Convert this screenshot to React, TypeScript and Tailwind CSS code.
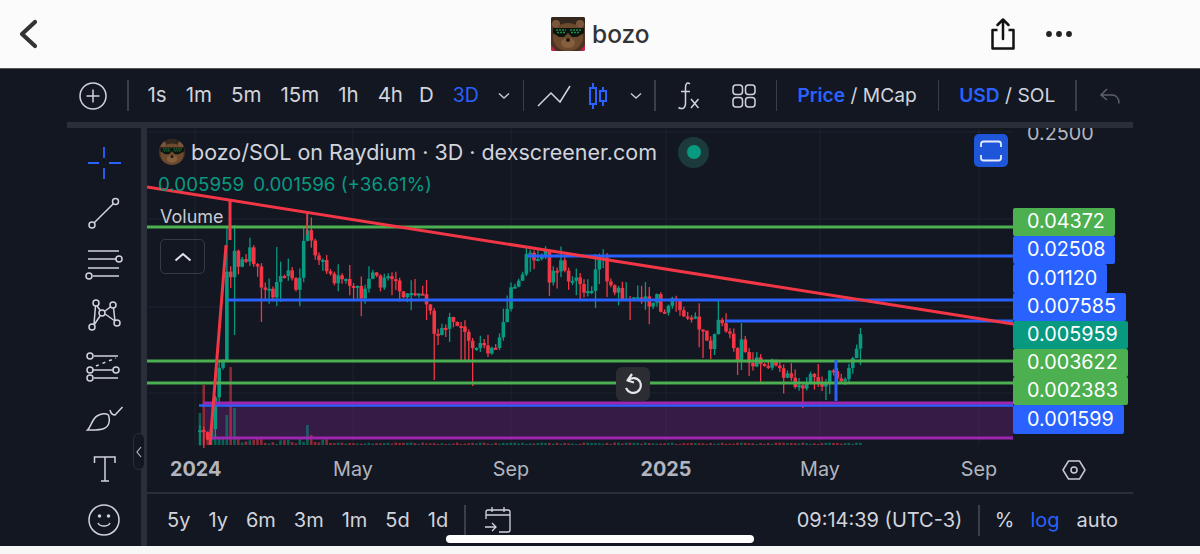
import React from "react";

const KEYS: [number, number][] = [[200,430],[204,432],[208,440],[212,428],[216,392],[220,362],[224,360],[227,268],[231,278],[235,247],[239,270],[243,258],[247,268],[251,244],[255,270],[259,268],[263,298],[267,280],[271,295],[275,290],[278,270],[282,282],[286,266],[290,270],[293,287],[297,288],[301,273],[305,228],[309,240],[313,248],[317,262],[321,248],[325,268],[329,275],[333,285],[337,276],[345,285],[352,279],[357,290],[364,298],[370,270],[375,268],[378,285],[382,282],[386,272],[392,280],[397,285],[403,295],[412,292],[420,294],[424,300],[430,312],[435,333],[440,335],[447,322],[452,320],[456,326],[460,330],[465,335],[468,345],[474,347],[478,342],[485,346],[490,350],[495,345],[500,340],[503,325],[507,305],[511,290],[515,283],[520,285],[527,257],[537,256],[542,255],[546,253],[550,283],[556,268],[562,265],[568,285],[575,280],[585,292],[590,300],[595,268],[600,258],[604,262],[608,285],[612,292],[620,293],[625,300],[630,298],[640,300],[650,303],[656,297],[663,313],[672,298],[680,310],[690,316],[697,322],[704,338],[710,350],[714,340],[720,308],[725,332],[731,335],[737,362],[741,342],[746,350],[752,365],[757,358],[762,362],[767,372],[771,358],[777,362],[787,378],[795,382],[800,385],[805,390],[809,370],[813,378],[817,382],[825,388],[828,372],[833,368],[837,378],[843,382],[848,370],[852,360],[856,352],[860,335]];

const WICKS: [number, number | null, number | null][] = [[234,225,335],[262,null,322],[277,247,null],[305,228,null],[309,213,null],[435,null,380],[439,null,345],[460,null,360],[465,null,360],[468,null,360],[474,null,386],[527,248,null],[597,254,null],[595,null,308],[720,300,null],[737,null,375],[743,323,370],[703,null,358],[825,null,400],[860,328,null],[226,228,null],[215,null,438]];

let seed = 12345;
const rnd = () => {
  seed = (seed * 1103515245 + 12345) & 0x7fffffff;
  return seed / 0x7fffffff;
};
const closeAt = (x: number) => {
  for (let i = 1; i < KEYS.length; i++) {
    if (x <= KEYS[i][0]) {
      const [x0, y0] = KEYS[i - 1];
      const [x1, y1] = KEYS[i];
      return y0 + ((y1 - y0) * (x - x0)) / (x1 - x0);
    }
  }
  return KEYS[KEYS.length - 1][1];
};
type C = { x: number; o: number; c: number; h: number; l: number; v: number };
const CANDLES: C[] = [];
{
  let prev = 432;
  for (let i = 0; i <= 172; i++) {
    const x = 200 + i * 3.84;
    const amp = x > 240 && x < 800 ? 11 : x >= 800 ? 5 : 1;
    const c = closeAt(x) + (rnd() - 0.5) * amp;
    const o = prev;
    const longH = rnd() > 0.6 ? 18 : 5;
    const longL = rnd() > 0.6 ? 20 : 5;
    let h = Math.min(o, c) - rnd() * longH;
    let l = Math.max(o, c) + rnd() * longL;
    for (const [wx, wh, wl] of WICKS) {
      if (Math.abs(wx - x) < 1.95) {
        if (wh !== null) h = wh;
        if (wl !== null) l = wl;
      }
    }
    if (x > 205 && l > 440) l = 440;
    const base = x < 240 ? 8 : 1 + rnd() * (x < 330 ? 6 : 1.5);
    CANDLES.push({ x, o, c, h, l, v: base });
    prev = c;
  }
}
const VOLS: Record<number, number> = { 200: 32, 203: 60, 207: 12, 215: 10, 226: 30, 230: 78, 234: 37, 307: 20, 311: 10 };
const volOf = (c: C) => {
  for (const k of Object.keys(VOLS)) if (Math.abs(Number(k) - c.x) < 1.95) return VOLS[Number(k)];
  return c.v;
};

const GREEN = "#089981";
const RED = "#f23645";
const LBLUE = "#2962ff";
const LGREEN = "#4caf50";

function Chart() {
  return (
    <svg className="absolute inset-0" width={986} height={320} viewBox="147 128 986 320">
      {[195, 353, 511, 666, 820, 979].map((x) => (
        <line key={x} x1={x} x2={x} y1={128} y2={445} stroke="#1f2330" />
      ))}
      {[132, 219, 307, 393].map((y) => (
        <line key={y} x1={147} x2={1013} y1={y} y2={y} stroke="#1f2330" />
      ))}
      <rect x={205} y={403} width={808} height={35} fill="#9c27b0" fillOpacity={0.26} />
      {CANDLES.map((c, i) => (
        <rect key={i} x={c.x - 1.4} y={445 - volOf(c)} width={2.6} height={volOf(c)} fill={c.c <= c.o ? GREEN : RED} fillOpacity={0.55} />
      ))}
      {CANDLES.map((c, i) => {
        const col = c.c <= c.o ? GREEN : RED;
        return (
          <g key={i}>
            <line x1={c.x} x2={c.x} y1={c.h} y2={c.l} stroke={col} strokeWidth={1.3} />
            <rect x={c.x - 1.8} y={Math.min(c.o, c.c)} width={3.6} height={Math.max(2, Math.abs(c.o - c.c))} fill={col} />
          </g>
        );
      })}
      <g strokeWidth={3} fill="none">
        <path d="M147 227H1013M147 361H1013M147 383H1013" stroke={LGREEN} />
        <path d="M199 405.500H1013" stroke={LBLUE} strokeWidth={2.500} />
        <path d="M203 403H1013M210 438H1013" stroke="#9c27b0" />
        <path d="M527 256H1013M228 300H1013M725 321H1013" stroke={LBLUE} />
        <path d="M836 360V401" stroke={LBLUE} />
        <path d="M147 187L1013 324" stroke={RED} />
        <path d="M210 445L226 245" stroke={RED} />
        <path d="M230 200V240" stroke={RED} />
        <path d="M307 213V235" stroke={RED} strokeWidth={1.5} />
      </g>
    </svg>
  );
}

function Bear({ size, round }: { size: number; round?: boolean }) {
  return (
    <svg width={size} height={size} viewBox="0 0 34 34" className={round ? "rounded-full shrink-0" : "rounded-[2px] shrink-0"}>
      <rect width={34} height={34} fill="#4a3324" />
      <rect width={34} height={7} fill="#33271e" />
      <circle cx={5} cy={7} r={4} fill="#7a573c" />
      <circle cx={29} cy={7} r={4} fill="#7a573c" />
      <ellipse cx={17} cy={20} rx={15} ry={14} fill="#6d4a2e" />
      <ellipse cx={17} cy={26} rx={7} ry={5} fill="#84603f" />
      <circle cx={17} cy={23} r={2} fill="#221510" />
      <path d="M2 11H33V16L26 20H21L17 16L13 20H8L2 16Z" fill="#0b1510" />
      <path d="M5 13H15M19 13H30M6 15.500H14M20 15.500H29" stroke="#1e8a45" strokeWidth={1.3} strokeDasharray="2 1" />
      {!round && <path d="M0 34V28L5 34ZM34 34V28L29 34Z" fill="#c81f4a" />}
    </svg>
  );
}

const Sep = () => <div className="w-[1.5px] h-[31px] bg-[#3a3e4a] shrink-0" />;
const Chev = () => (
  <svg width={14} height={8} viewBox="0 0 14 8" fill="none" stroke="#c8cad0" strokeWidth={1.4} className="shrink-0">
    <path d="M2 1.500L7 6L12 1.500" />
  </svg>
);

function Tool({ y, children }: { y: number; children: React.ReactNode }) {
  return (
    <svg width={44} height={44} viewBox={`82 ${y} 44 44`} fill="none" stroke="#d1d4dc" strokeWidth={1.5} className="shrink-0">
      {children}
    </svg>
  );
}

const LABELS: [string, string][] = [
  ["0.04372", "bg-[#4caf50]"],
  ["0.02508", "bg-[#2962ff]"],
  ["0.01120", "bg-[#2962ff]"],
  ["0.007585", "bg-[#2962ff]"],
  ["0.005959", "bg-[#089981]"],
  ["0.003622", "bg-[#4caf50]"],
  ["0.002383", "bg-[#4caf50]"],
  ["0.001599", "bg-[#2962ff]"],
];

export default function App() {
  return (
    <div className="relative w-[1200px] h-[554px] overflow-hidden bg-[#f7f7f7] flex flex-col font-['Inter',sans-serif]">
      <header className="h-[68px] shrink-0 bg-[#fbfbfb] flex items-center border-b border-[#555] box-content">
        <svg width={24} height={32} viewBox="0 0 24 32" fill="none" stroke="#333" strokeWidth={4.2} strokeLinecap="round" strokeLinejoin="round" className="ml-[17px] shrink-0">
          <path d="M18 4L5 16L18 28" />
        </svg>
        <div className="ml-[510px] flex items-center gap-[7px]">
          <Bear size={34} />
          <span className="text-[24.500px] leading-none font-medium text-[#333] w-[60px]">bozo</span>
        </div>
        <svg width={28} height={34} viewBox="0 0 28 34" fill="none" stroke="#111" strokeWidth={2.5} strokeLinejoin="round" className="ml-[337px] shrink-0">
          <path d="M8.5 13H3.5V31.5H24.5V13H19.5" />
          <path d="M14 22V3M8.5 8L14 2.5L19.5 8" strokeLinecap="round" />
        </svg>
        <svg width={26} height={8} viewBox="0 0 26 8" fill="#222" className="ml-[29px] shrink-0">
          <circle cx={3} cy={4} r={2.9} />
          <circle cx={13} cy={4} r={2.9} />
          <circle cx={23} cy={4} r={2.9} />
        </svg>
      </header>

      <main className="h-[477px] shrink-0 bg-[#131722] flex flex-col">
        <div className="h-[53px] shrink-0 flex items-center pl-[79px] text-[19.200px] text-[#d1d4dc]">
          <svg width={28} height={28} viewBox="0 0 28 28" fill="none" stroke="#d1d4dc" strokeWidth={1.5} className="shrink-0">
            <circle cx={14} cy={14} r={13} />
            <path d="M14 7.5V20.5M7.5 14H20.5" />
          </svg>
          <div className="ml-[20px]"><Sep /></div>
          <div className="ml-[19px] flex items-center gap-[19px] text-[20.500px]">
            <span>1s</span>
            <span>1m</span>
            <span>5m</span>
            <span>15m</span>
            <span>1h</span>
            <span className="mr-[-3px]">4h</span>
            <span>D</span>
            <span className="text-[#2962ff] text-[19.500px]">3D</span>
          </div>
          <div className="ml-[18px]"><Chev /></div>
          <div className="ml-[12px]"><Sep /></div>
          <svg width={34} height={24} viewBox="0 0 34 24" fill="none" stroke="#d1d4dc" strokeWidth={1.5} className="ml-[13px] shrink-0">
            <path d="M1 22L14 9L23 18L33 2" />
          </svg>
          <svg width={20} height={28} viewBox="0 0 20 28" fill="none" stroke="#2962ff" strokeWidth={2} className="ml-[17px] shrink-0">
            <path d="M5 1V27M15 5V24" />
            <rect x={2} y={6} width={6} height={16} fill="#131722" />
            <rect x={12} y={9} width={6} height={10} fill="#131722" />
          </svg>
          <div className="ml-[21px]"><Chev /></div>
          <div className="ml-[11px]"><Sep /></div>
          <svg width={24} height={30} viewBox="0 0 24 30" fill="none" stroke="#d1d4dc" strokeWidth={1.5} className="ml-[20px] shrink-0">
            <path d="M14 3C11 0.5 9.5 3 9.5 7V22C9.5 27 6.5 29 2.5 26.5M5 10.5H14M15 18L22.5 27M22.5 18L15 27" />
          </svg>
          <svg width={24} height={24} viewBox="0 0 24 24" fill="none" stroke="#d1d4dc" strokeWidth={1.5} className="ml-[32px] shrink-0">
            <rect x={1} y={1} width={9.5} height={9.5} rx={3} />
            <rect x={13.5} y={1} width={9.5} height={9.5} rx={3} />
            <rect x={1} y={13.5} width={9.5} height={9.5} rx={3} />
            <rect x={13.5} y={13.5} width={9.5} height={9.5} rx={3} />
          </svg>
          <div className="ml-[20px]"><Sep /></div>
          <div className="ml-[20px] whitespace-nowrap">
            <span className="text-[#2962ff] font-semibold">Price</span> / MCap
          </div>
          <div className="ml-[21px]"><Sep /></div>
          <div className="ml-[20px] whitespace-nowrap">
            <span className="text-[#2962ff] font-semibold">USD</span> / SOL
          </div>
          <div className="ml-[20px]"><Sep /></div>
          <svg width={22} height={18} viewBox="0 0 22 18" fill="none" stroke="#5d606b" strokeWidth={1.5} className="ml-[22px] shrink-0">
            <path d="M8 2L2 8L8 13M2 8H13C17 8 20 11 20 16.5" />
          </svg>
        </div>

        <div className="ml-[67px] w-[1066px] h-[6px] shrink-0 bg-[#2a2e39]" />

        <div className="ml-[67px] w-[1066px] flex-1 min-h-0 flex relative">
          <aside className="w-[74px] shrink-0 flex flex-col items-center pt-[13px] gap-[7px]">
            <Tool y={141}>
              <path d="M104 147V158M104 168V179M88 163H99M109 163H121" stroke="#2962ff" strokeWidth={1.8} />
            </Tool>
            <Tool y={192}>
              <circle cx={115.5} cy={201.5} r={3} />
              <circle cx={92} cy={225} r={3} />
              <path d="M113.3 203.7L94.2 222.8" />
            </Tool>
            <Tool y={243}>
              <path d="M88 251H119M88 259H116M88 268H119M93 276H119" />
              <circle cx={119} cy={259} r={3} />
              <circle cx={89} cy={276} r={3} />
            </Tool>
            <Tool y={294}>
              <circle cx={96} cy={303} r={3} />
              <circle cx={113} cy={305} r={3} />
              <circle cx={102} cy={313} r={3} />
              <circle cx={92} cy={327} r={3} />
              <circle cx={117} cy={323} r={3} />
              <path d="M97 306L100 310M111 306.5L105 311M94 325L100 316M115 321L113.5 308M115 321L105 314M94 324L95.5 306" />
            </Tool>
            <Tool y={345}>
              <path d="M94 356H118M93 370H113M94 378H118" />
              <path d="M96 366L116 358" strokeDasharray="3 4" />
              <circle cx={90} cy={356} r={3} />
              <circle cx={90} cy={370} r={3} />
              <circle cx={116} cy={370} r={3} />
              <circle cx={90} cy={378} r={3} />
            </Tool>
            <Tool y={396}>
              <path d="M87.5 430C91 427 92 419 97 416C101 413.500 106 413 108.500 415C110 419 110 426 104 428.500C99 430.500 93 430 87.500 430Z" />
              <path d="M110 410C111 414 113 415 115 415L122.500 407" />
            </Tool>
            <Tool y={447}>
              <path d="M94.500 463V457H115V463M94.500 457H115M105 457V481M101 481H109" />
            </Tool>
            <Tool y={498}>
              <circle cx={104} cy={520} r={15} />
              <circle cx={99.500} cy={516} r={1} fill="#d1d4dc" />
              <circle cx={108.500} cy={516} r={1} fill="#d1d4dc" />
              <path d="M98 523C100 527 108 527 110 523" />
            </Tool>
          </aside>
          <div className="w-[6px] shrink-0 bg-[#2a2e39]" />

          <div className="absolute left-[66px] top-[305px] w-[12px] h-[37px] bg-[#131722] border border-[#2a2e39] rounded-[6px] flex items-center justify-center">
            <svg width={6} height={12} viewBox="0 0 6 12" fill="none" stroke="#b2b5be" strokeWidth={1.2}>
              <path d="M5 1L1 6L5 11" />
            </svg>
          </div>

          <section className="flex-1 min-w-0 flex flex-col">
            <div className="relative h-[320px] shrink-0 overflow-hidden">
              <Chart />

              <div className="absolute left-[12px] top-[10px] flex flex-col items-start">
                <div className="flex items-center h-[28px]">
                  <Bear size={26} round />
                  <span className="ml-[6px] text-[21.500px] text-[#d1d4dc] whitespace-nowrap">bozo/SOL on Raydium · 3D · dexscreener.com</span>
                  <span className="ml-[21px] w-[31px] h-[31px] rounded-full bg-[#1d3a3a] flex items-center justify-center">
                    <span className="w-[14px] h-[14px] rounded-full bg-[#089981]" />
                  </span>
                </div>
                <div className="mt-[7px] ml-[-1px] text-[18.800px] leading-[24px] text-[#089981] whitespace-nowrap flex gap-[9px]"><span>0.005959</span><span>0.001596 (+36.61%)</span></div>
                <div className="mt-[8px] ml-[1px] text-[18px] leading-[24px] text-[#c8cad0]">Volume</div>
                <div className="mt-[10px] ml-[1px] w-[45px] h-[35px] rounded-[5px] border border-[#363a45] flex items-center justify-center">
                  <svg width={18} height={10} viewBox="0 0 18 10" fill="none" stroke="#e0e3eb" strokeWidth={2}>
                    <path d="M1.500 8.500L9 2L16.500 8.500" />
                  </svg>
                </div>
              </div>

              <div className="absolute left-[827px] top-[6px] w-[34px] h-[33px] rounded-[5px] bg-[#1f55d8] flex items-center justify-center">
                <svg width={24} height={24} viewBox="0 0 24 24" fill="none" stroke="#e6ecff" strokeWidth={1.800}>
                  <path d="M2 8V5C2 3.500 3 2.500 4.500 2.500H19.500C21 2.500 22 3.500 22 5V8M2 16V19C2 20.500 3 21.500 4.500 21.500H19.500C21 21.500 22 20.500 22 19V16" />
                </svg>
              </div>

              <div className="absolute left-[880px] top-[-7px] text-[19.800px] leading-[24px] text-[#b2b5be]">0.2500</div>

              <div className="absolute left-[866px] top-[80px] flex flex-col items-start">
                {LABELS.map(([t, bg]) => (
                  <div key={t} className={`h-[28.200px] pl-[14px] pr-[10px] rounded-[2px] flex items-center text-[19.800px] text-white ${bg}`}>
                    {t}
                  </div>
                ))}
              </div>

              <button className="absolute left-[469px] top-[239px] w-[34px] h-[34px] rounded-[6px] bg-[#2b2d33] flex items-center justify-center">
                <svg width={20} height={22} viewBox="0 0 20 22" fill="none" stroke="#e6e7ea" strokeWidth={2.200}>
                  <path d="M5 7.500C8 4 14 4.500 16.800 8.500C19 12 17.800 17 14 19C10 21 5 19.500 3 15" />
                  <path d="M9 1L4.500 7.500L11 9.500" strokeLinejoin="round" />
                </svg>
              </button>
            </div>

            <div className="h-[44px] shrink-0 flex items-center pl-[23px] text-[19.800px] text-[#b2b5be] border-b-2 border-[#2a2e39] box-content">
              <span className="w-[50px] font-bold text-center">2024</span>
              <span className="ml-[113px] w-[40px] text-center">May</span>
              <span className="ml-[118px] w-[40px] text-center">Sep</span>
              <span className="ml-[109px] w-[52px] font-bold text-center">2025</span>
              <span className="ml-[108px] w-[40px] text-center">May</span>
              <span className="ml-[119px] w-[40px] text-center">Sep</span>
              <svg width={24} height={22} viewBox="0 0 24 22" fill="none" stroke="#c8cad0" strokeWidth={1.500} className="ml-[63px] shrink-0">
                <path d="M6.500 2H17.500L23 11L17.500 20H6.500L1 11Z" strokeLinejoin="round" />
                <circle cx={12} cy={11} r={3} />
              </svg>
            </div>

            <div className="flex-1 min-h-0 flex items-center pl-[20px] pr-[15px] text-[20px] text-[#d1d4dc]">
              <div className="flex items-center gap-[18px]">
                <span>5y</span>
                <span>1y</span>
                <span>6m</span>
                <span>3m</span>
                <span>1m</span>
                <span>5d</span>
                <span>1d</span>
              </div>
              <div className="ml-[16px]"><Sep /></div>
              <svg width={28} height={28} viewBox="0 0 28 28" fill="none" stroke="#d1d4dc" strokeWidth={1.300} className="ml-[18px] shrink-0">
                <path d="M2 13V6C2 5 3 4 4 4H24C25 4 26 5 26 6V24C26 25 25 26 24 26H15M2 9H26M8 1V6M20 1V6" />
                <path d="M1 21H12M8 17L12 21L8 25" />
              </svg>
              <span className="ml-auto whitespace-nowrap">09:14:39 (UTC-3)</span>
              <div className="ml-[16px]"><Sep /></div>
              <span className="ml-[15px]">%</span>
              <span className="ml-[16px] text-[#2962ff]">log</span>
              <span className="ml-[17px]">auto</span>
            </div>
          </section>
        </div>
      </main>
      <div className="absolute left-[446px] top-[535px] w-[308px] h-[8px] rounded-full bg-white" />
    </div>
  );
}
